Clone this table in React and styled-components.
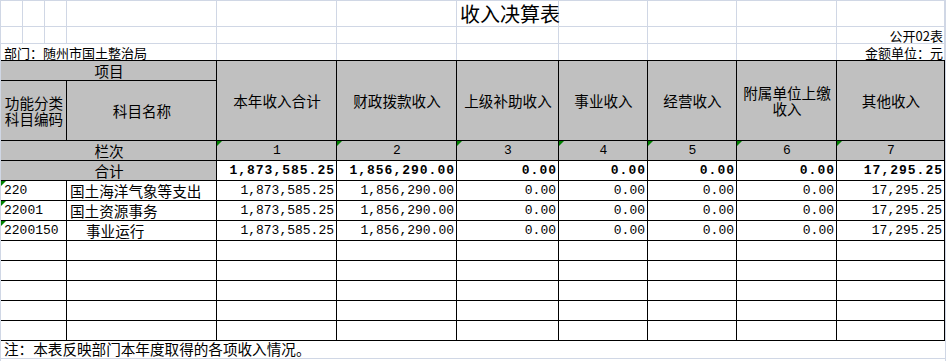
import styled, { createGlobalStyle, css } from 'styled-components';

const GRID = '#d0d7e5';
const GRAY = '#c0c0c0';
const CJK = '"Noto Sans CJK SC", "Noto Sans", sans-serif';
const MONO = '"Liberation Mono", "DejaVu Sans Mono", monospace';

const GlobalStyle = createGlobalStyle`
  html, body {
    margin: 0;
    background: #fff;
  }
  body {
    font-family: ${CJK};
    color: #000;
  }
`;

const Sheet = styled.div`
  box-sizing: border-box;
  width: 946px;
  height: 361px;
  border-top: 1px solid ${GRID};
  border-left: 1px solid ${GRID};
  border-right: 1px solid ${GRID};
  overflow: hidden;
`;

const TopGrid = styled.div`
  display: grid;
  grid-template-columns: 22px 22px 22px 150px 120px 120px 102px 89px 89px 100px 108px;
  grid-template-rows: 26px 17px 16px;
`;

const TopCell = styled.div`
  box-sizing: border-box;
  display: flex;
  align-items: flex-end;
  justify-content: ${({ $align }) => $align || 'flex-start'};
  padding: 0 1px 1px 3px;
  border-right: 1px solid ${GRID};
  border-bottom: ${({ $last }) => ($last ? 'none' : `1px solid ${GRID}`)};
  grid-column: ${({ $span }) => ($span ? `span ${$span}` : 'auto')};
  font-size: 13px;
  line-height: 1;
  white-space: nowrap;
`;

const Title = styled.span`
  font-size: 20px;
  line-height: 1;
  margin: 0 auto 1px;
`;

const Table = styled.div`
  display: grid;
  grid-template-columns: 66px 150px 120px 120px 102px 89px 89px 100px 108px;
  grid-auto-rows: 20px;
  grid-template-rows: 20px 60px;
  border-top: 1px solid #000;
`;

const Cell = styled.div`
  box-sizing: border-box;
  position: relative;
  display: flex;
  align-items: center;
  justify-content: ${({ $align }) => $align || 'flex-start'};
  padding: 0 2px 0 ${({ $indent }) => ($indent ? '19px' : '3px')};
  border-right: 1px solid #000;
  border-bottom: 1px solid #000;
  background: ${({ $gray }) => ($gray ? GRAY : '#fff')};
  grid-column: ${({ $cols }) => ($cols ? `span ${$cols}` : 'auto')};
  grid-row: ${({ $rows }) => ($rows ? `span ${$rows}` : 'auto')};
  font-size: 14.6px;
  line-height: 16px;
  text-align: center;
  white-space: nowrap;

  ${({ $mark }) => $mark && css`
    &::before {
      content: '';
      position: absolute;
      top: 0;
      left: 0;
      border-top: 5px solid #008000;
      border-right: 5px solid transparent;
    }
  `}
`;

const Num = styled.span`
  font-family: ${MONO};
  font-size: 13px;
  line-height: 1;
  ${({ $bold }) => $bold && css`
    font-weight: bold;
    letter-spacing: 1px;
    margin-right: -1px;
  `}
`;

const Footer = styled.div`
  box-sizing: border-box;
  height: 18px;
  display: flex;
  align-items: center;
  padding-left: 3px;
  border-bottom: 1px solid ${GRID};
  font-size: 14.6px;
  line-height: 1;
`;

const headers = ['本年收入合计', '财政拨款收入', '上级补助收入', '事业收入', '经营收入', '附属单位上缴\n收入', '其他收入'];
const totals = ['1,873,585.25', '1,856,290.00', '0.00', '0.00', '0.00', '0.00', '17,295.25'];
const rows = [
  { code: '220', name: '国土海洋气象等支出' },
  { code: '22001', name: '国土资源事务' },
  { code: '2200150', name: '事业运行', indent: true },
];

export default function App() {
  return (
    <>
      <GlobalStyle />
      <Sheet>
        <TopGrid>
          {Array.from({ length: 6 }).map((_, i) => <TopCell key={`a${i}`} />)}
          <TopCell><Title>收入决算表</Title></TopCell>
          {Array.from({ length: 4 }).map((_, i) => <TopCell key={`b${i}`} />)}

          {Array.from({ length: 10 }).map((_, i) => <TopCell key={`c${i}`} />)}
          <TopCell $align="flex-end">公开02表</TopCell>

          <TopCell $span={4} $last>部门：随州市国土整治局</TopCell>
          {Array.from({ length: 6 }).map((_, i) => <TopCell key={`d${i}`} $last />)}
          <TopCell $align="flex-end" $last>金额单位：元</TopCell>
        </TopGrid>

        <Table>
          <Cell $cols={2} $gray $align="center">项目</Cell>
          {headers.map(h => (
            <Cell key={h} $rows={2} $gray $align="center">
              <span>{h.split('\n').map((line, i) => <div key={i}>{line}</div>)}</span>
            </Cell>
          ))}
          <Cell $gray $align="center"><span><div>功能分类</div><div>科目编码</div></span></Cell>
          <Cell $gray $align="center">科目名称</Cell>

          <Cell $cols={2} $gray $align="center">栏次</Cell>
          {headers.map((h, i) => (
            <Cell key={`n${i}`} $gray $mark $align="center"><Num>{i + 1}</Num></Cell>
          ))}

          <Cell $cols={2} $gray $align="center">合计</Cell>
          {totals.map((v, i) => (
            <Cell key={`t${i}`} $align="flex-end"><Num $bold>{v}</Num></Cell>
          ))}

          {rows.map(row => (
            <>
              <Cell key={`${row.code}-c`} $mark><Num>{row.code}</Num></Cell>
              <Cell key={`${row.code}-n`} $indent={row.indent}>{row.name}</Cell>
              {totals.map((v, i) => (
                <Cell key={`${row.code}-${i}`} $align="flex-end"><Num>{v}</Num></Cell>
              ))}
            </>
          ))}

          {Array.from({ length: 45 }).map((_, i) => <Cell key={`e${i}`} />)}
        </Table>

        <Footer>注：本表反映部门本年度取得的各项收入情况。</Footer>
      </Sheet>
    </>
  );
}
